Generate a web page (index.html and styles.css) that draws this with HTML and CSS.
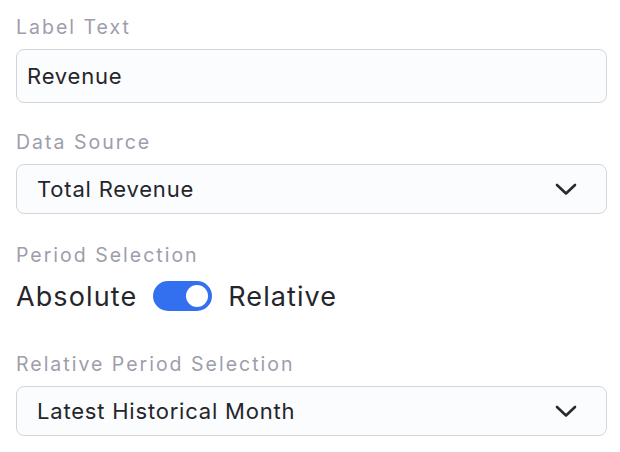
FILE: index.html
```html
<!DOCTYPE html>
<html>
<head>
<meta charset="utf-8">
<link rel="stylesheet" href="styles.css">
</head>
<body>
<div class="form">
  <div class="field">
    <div class="label">Label Text</div>
    <div class="box input">Revenue</div>
  </div>
  <div class="field">
    <div class="label">Data Source</div>
    <div class="box select">
      <span>Total Revenue</span>
      <svg class="chev" width="22" height="13" viewBox="0 0 22 13"><path d="M2 2 L11 10.5 L20 2" fill="none" stroke="#2a2a2e" stroke-width="2.6" stroke-linecap="round" stroke-linejoin="round"/></svg>
    </div>
  </div>
  <div class="field">
    <div class="label">Period Selection</div>
    <div class="toggle-row">
      <span>Absolute</span>
      <span class="switch"><span class="knob"></span></span>
      <span>Relative</span>
    </div>
  </div>
  <div class="field">
    <div class="label">Relative Period Selection</div>
    <div class="box select">
      <span>Latest Historical Month</span>
      <svg class="chev" width="22" height="13" viewBox="0 0 22 13"><path d="M2 2 L11 10.5 L20 2" fill="none" stroke="#2a2a2e" stroke-width="2.6" stroke-linecap="round" stroke-linejoin="round"/></svg>
    </div>
  </div>
</div>
</body>
</html>
```

FILE: styles.css
```css
html, body {
  margin: 0;
  padding: 0;
  background: #ffffff;
}
body {
  font-family: Inter, "Noto Sans", sans-serif;
  color: #25252b;
}
.form {
  padding: 15px 13px 0 16px;
  display: flex;
  flex-direction: column;
}
.field {
  display: flex;
  flex-direction: column;
}
.label {
  font-size: 19.5px;
  line-height: 24px;
  letter-spacing: 2px;
  color: #9e9dac;
  margin-bottom: 10px;
}
.box {
  box-sizing: border-box;
  border: 1.5px solid #d3d6db;
  border-radius: 8px;
  background: #fbfcfd;
  font-size: 22px;
  letter-spacing: 0.8px;
  display: flex;
  align-items: center;
}
.input {
  height: 54px;
  padding-left: 10px;
  margin-bottom: 27px;
}
.select {
  height: 50px;
  padding: 0 29px 0 20px;
  justify-content: space-between;
}
.field:nth-child(2) .select {
  margin-bottom: 29px;
}
.toggle-row {
  display: flex;
  align-items: center;
  gap: 16px;
  font-size: 27px;
  letter-spacing: 1.1px;
  height: 32px;
  margin-top: 3px;
  margin-bottom: 40px;
}
.switch {
  width: 59px;
  height: 30px;
  border-radius: 15px;
  background: #3370ef;
  position: relative;
  flex: none;
}
.knob {
  position: absolute;
  right: 4px;
  top: 4px;
  width: 22px;
  height: 22px;
  border-radius: 50%;
  background: #ffffff;
}
```
